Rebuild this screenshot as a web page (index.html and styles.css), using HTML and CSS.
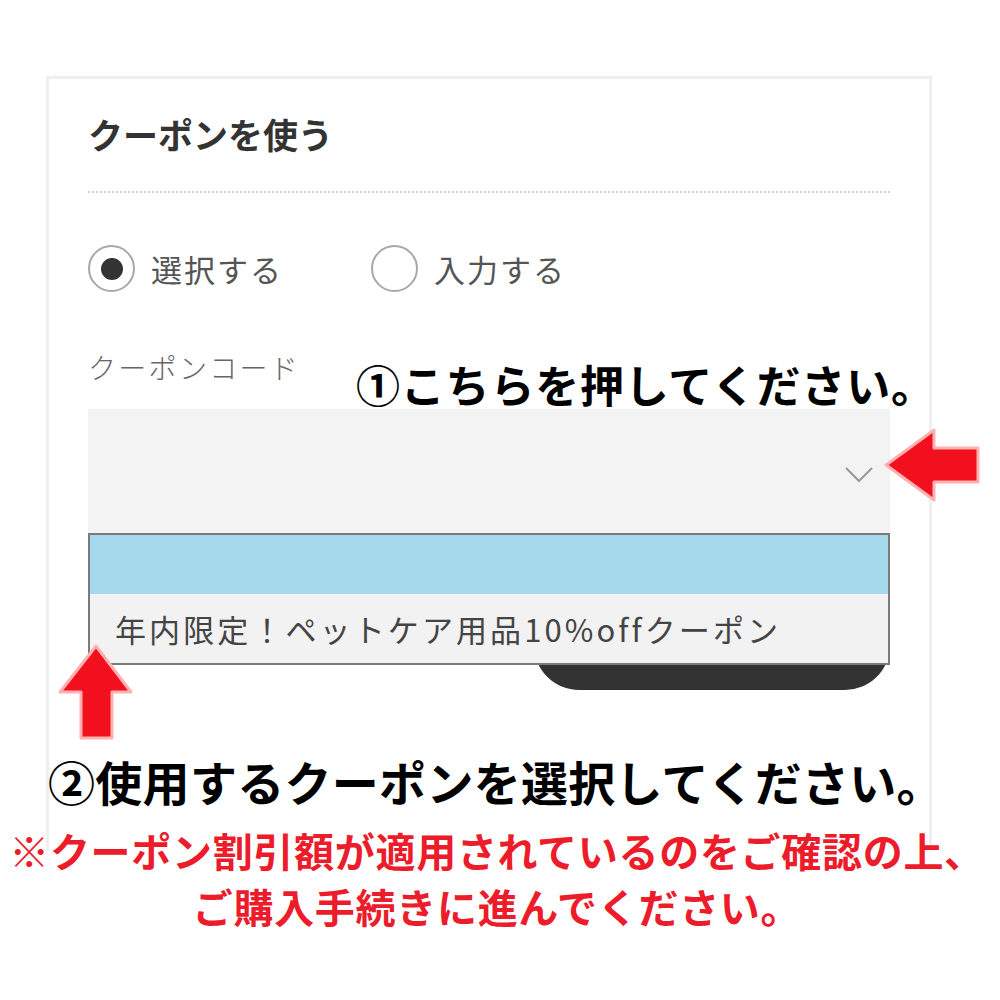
FILE: index.html
```html
<!DOCTYPE html>
<html lang="ja">
<head>
    <meta charset="UTF-8">
    <meta name="viewport" content="width=device-width, initial-scale=1.0">
    <title>クーポンを使う</title>
    <link rel="stylesheet" href="styles.css">
</head>
<body>
<div class="page">
    <div class="card">
        <h2 class="card-title">クーポンを使う</h2>
        <div class="divider"></div>

        <div class="radio-row">
            <label class="radio">
                <span class="radio-mark checked"></span>
                <span class="radio-text">選択する</span>
            </label>
            <label class="radio">
                <span class="radio-mark"></span>
                <span class="radio-text">入力する</span>
            </label>
        </div>

        <div class="field-label">クーポンコード</div>
        <div class="select-wrap">
            <div class="select">
                <svg class="chevron" width="30" height="18" viewBox="0 0 30 18">
                    <polyline points="2,2 15,15 28,2" fill="none" stroke="#999" stroke-width="2"/>
                </svg>
            </div>
            <ul class="options">
                <li class="option active"></li>
                <li class="option">年内限定！ペットケア用品10%offクーポン</li>
            </ul>
        </div>
        <div class="btn-row">
            <button class="apply-btn"></button>
        </div>
    </div>

    <!-- annotations -->
    <p class="note note-1">①こちらを押してください。</p>
    <svg class="arrow arrow-left" width="110" height="90" viewBox="0 0 110 90">
        <polygon points="6,45 54,10 54,28 98,28 98,62 54,62 54,80" fill="#f3101e" stroke="#ffb0b0" stroke-width="3" stroke-linejoin="round"/>
    </svg>
    <svg class="arrow arrow-up" width="90" height="110" viewBox="0 0 90 110">
        <polygon points="46,6 81,52 62,52 62,98 31,98 31,52 10,52" fill="#f3101e" stroke="#ffb0b0" stroke-width="3" stroke-linejoin="round"/>
    </svg>
    <p class="note note-2">②使用するクーポンを選択してください。</p>
    <p class="note warn">※クーポン割引額が適用されているのをご確認の上、<br>ご購入手続きに進んでください。</p>
</div>
</body>
</html>
```

FILE: styles.css
```css
* {
    box-sizing: border-box;
}
body {
    margin: 0;
    background: #fff;
    font-family: "Noto Sans CJK JP", "Noto Sans", sans-serif;
}
.page {
    position: relative;
    width: 1000px;
    height: 1000px;
    padding: 76px 0 0 46px;
    overflow: hidden;
}
.card {
    width: 886px;
    border: 3px solid #efefef;
    border-bottom: none;
    padding: 37px 39px 161px;
}
.card-title {
    margin: 0;
    font-size: 35px;
    line-height: 1;
    font-weight: 700;
    color: #333;
}
.divider {
    margin-top: 40px;
    border-top: 2px dotted #d4d4d4;
}
.radio-row {
    display: flex;
    margin-top: 52px;
}
.radio {
    display: flex;
    align-items: center;
    width: 283px;
}
.radio-mark {
    width: 47px;
    height: 47px;
    border: 2px solid #a8a8a8;
    border-radius: 50%;
    display: flex;
    align-items: center;
    justify-content: center;
    flex: none;
}
.radio-mark.checked::after {
    content: "";
    width: 22px;
    height: 22px;
    border-radius: 50%;
    background: #333;
}
.radio-text {
    margin-left: 16px;
    font-size: 31px;
    line-height: 1;
    letter-spacing: 2px;
    color: #555;
}
.field-label {
    margin-top: 61px;
    font-size: 28px;
    line-height: 1;
    letter-spacing: 2.3px;
    color: #666;
    font-weight: 300;
}
.select-wrap {
    position: relative;
    margin-top: 28px;
}
.select {
    height: 124px;
    background: #f3f3f3;
    display: flex;
    align-items: center;
    justify-content: flex-end;
    padding-right: 16px;
}
.chevron {
    margin-top: 8px;
}
.options {
    position: absolute;
    top: 100%;
    left: 0;
    right: 0;
    margin: 0;
    padding: 0;
    list-style: none;
    border: 2px solid #7a7a7a;
    background: #f2f2f2;
    z-index: 2;
}
.option {
    height: 69px;
    padding-left: 25px;
    display: flex;
    align-items: center;
    font-size: 31px;
    letter-spacing: 3.1px;
    color: #444;
}
.option.active {
    height: 59px;
    background: #a6d8ec;
}
.btn-row {
    display: flex;
    justify-content: flex-end;
    margin-top: 67px;
}
.apply-btn {
    width: 356px;
    height: 90px;
    border: none;
    border-radius: 45px;
    background: #333;
}
.note {
    position: absolute;
    margin: 0;
    line-height: 1;
    font-weight: 700;
    white-space: nowrap;
}
.note-1 {
    left: 356px;
    top: 362px;
    font-size: 44px;
    letter-spacing: 0.8px;
    color: #000;
}
.note-2 {
    left: 48px;
    top: 757px;
    font-size: 47px;
    letter-spacing: 0.3px;
    color: #000;
}
.warn {
    left: 0;
    top: 822px;
    width: 994px;
    text-align: center;
    font-size: 40px;
    line-height: 56px;
    letter-spacing: 0.7px;
    color: #ec1c2b;
}
.arrow {
    position: absolute;
    z-index: 3;
}
.arrow-left {
    left: 880px;
    top: 420px;
}
.arrow-up {
    left: 50px;
    top: 640px;
}
```
